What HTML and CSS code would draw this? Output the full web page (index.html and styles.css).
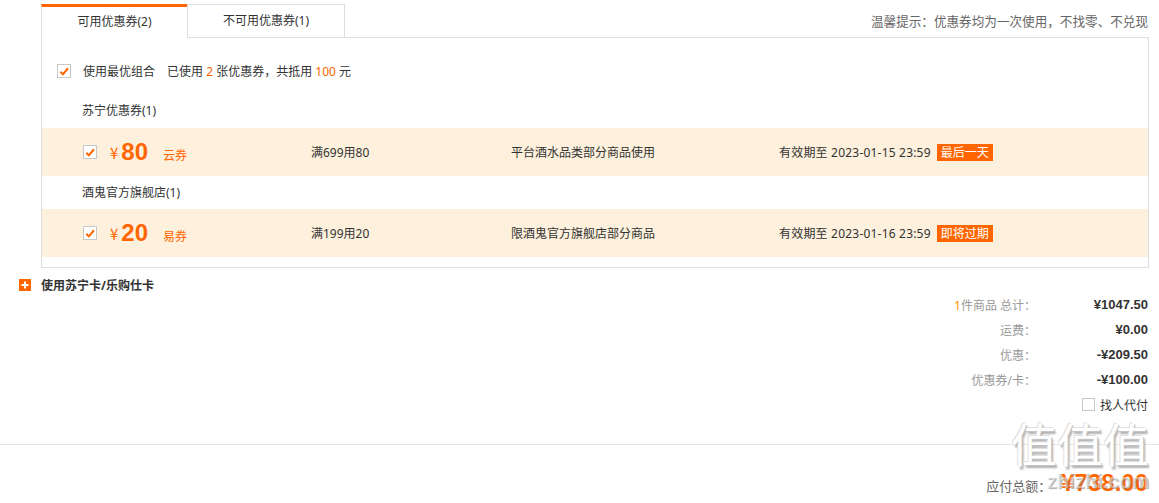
FILE: index.html
```html
<!DOCTYPE html>
<html>
<head>
<meta charset="utf-8">
<link rel="stylesheet" href="styles.css">
</head>
<body>
<div class="page">
  <div class="top">
    <div class="tabs">
      <div class="tab active">可用优惠券(2)</div>
      <div class="tab">不可用优惠券(1)</div>
    </div>
    <div class="tip">温馨提示：优惠券均为一次使用，不找零、不兑现</div>
  </div>
  <div class="panel">
    <div class="combo">
      <span class="cb checked"><svg viewBox="0 0 13 13" width="13" height="13"><path d="M2.5 6.8 L5.3 9.6 L10.8 3" fill="none" stroke="#f60" stroke-width="2.2"/></svg></span>
      <span class="combo-label">使用最优组合</span>
      <span class="combo-info">已使用 <em>2</em> 张优惠券，共抵用 <em>100</em> 元</span>
    </div>
    <div class="group-title first">苏宁优惠券(1)</div>
    <div class="coupon">
      <div class="c-amount">
        <span class="cb checked"><svg viewBox="0 0 13 13" width="13" height="13"><path d="M2.5 6.8 L5.3 9.6 L10.8 3" fill="none" stroke="#f60" stroke-width="2.2"/></svg></span>
        <span class="yen">¥</span><span class="num">80</span><span class="kind">云券</span>
      </div>
      <div class="c-rule">满699用80</div>
      <div class="c-scope">平台酒水品类部分商品使用</div>
      <div class="c-date"><span class="date-text">有效期至 2023-01-15 23:59</span><span class="badge">最后一天</span></div>
    </div>
    <div class="group-title">酒鬼官方旗舰店(1)</div>
    <div class="coupon">
      <div class="c-amount">
        <span class="cb checked"><svg viewBox="0 0 13 13" width="13" height="13"><path d="M2.5 6.8 L5.3 9.6 L10.8 3" fill="none" stroke="#f60" stroke-width="2.2"/></svg></span>
        <span class="yen">¥</span><span class="num">20</span><span class="kind">易券</span>
      </div>
      <div class="c-rule">满199用20</div>
      <div class="c-scope">限酒鬼官方旗舰店部分商品</div>
      <div class="c-date"><span class="date-text">有效期至 2023-01-16 23:59</span><span class="badge">即将过期</span></div>
    </div>
  </div>
  <div class="card-row">
    <span class="plus"><svg viewBox="0 0 12 12" width="12" height="12"><rect width="12" height="12" fill="#f60"/><path d="M6 2.5 V9.5 M2.5 6 H9.5" stroke="#fff" stroke-width="2"/></svg></span>
    <span class="card-label">使用苏宁卡/乐购仕卡</span>
  </div>
  <div class="summary">
    <div class="s-row"><span class="s-label"><i>1</i>件商品 总计：</span><span class="s-val">¥1047.50</span></div>
    <div class="s-row"><span class="s-label">运费：</span><span class="s-val">¥0.00</span></div>
    <div class="s-row"><span class="s-label">优惠：</span><span class="s-val">-¥209.50</span></div>
    <div class="s-row"><span class="s-label">优惠券/卡：</span><span class="s-val">-¥100.00</span></div>
    <div class="s-row pay"><span class="cb"></span><span class="pay-label">找人代付</span></div>
  </div>
  <div class="divider"></div>
  <div class="total">
    <span class="t-label">应付总额：</span><span class="t-val">¥738.00</span>
    <div class="watermark"><span class="wm-big">值值值</span><span class="wm-small">zhizhi.com</span></div>
  </div>
</div>
</body>
</html>
```

FILE: styles.css
```css
* { box-sizing: border-box; }
html, body { margin: 0; padding: 0; background: #fff; }
body {
  font-family: "Noto Sans", "Noto Sans CJK SC", "Microsoft YaHei", sans-serif;
  font-size: 12px;
  color: #333;
}
.page { width: 1159px; height: 503px; overflow: hidden; }

.top {
  display: flex;
  justify-content: space-between;
  align-items: flex-end;
  padding: 4px 11px 0 41px;
  height: 37px;
}
.tabs { display: flex; position: relative; z-index: 1; margin-bottom: -1px; }
.tab {
  height: 34px;
  line-height: 31px;
  text-align: center;
  font-size: 12px;
  color: #333;
  border: 1px solid #ddd;
}
.tab.active {
  width: 146px;
  border-top: 3px solid #f60;
  border-right: none;
  border-bottom: none;
  background: #fff;
  line-height: 29px;
}
.tab:not(.active) {
  width: 158px;
  background: #fff;
}
.tip {
  color: #666;
  font-size: 12.6px;
  line-height: 16px;
  margin-bottom: 7px;
}

.panel {
  margin-left: 41px;
  width: 1108px;
  border: 1px solid #ddd;
  padding: 13px 0 10px;
}
.combo {
  display: flex;
  align-items: center;
  height: 40px;
  padding-left: 15px;
}
.cb {
  display: inline-flex;
  width: 14px;
  height: 14px;
  border: 1px solid #c8c8c8;
  background: #fff;
  align-items: center;
  justify-content: center;
  flex: none;
}
.cb svg { display: block; }
.combo-label { margin-left: 12px; }
.combo-info { margin-left: 12px; }
.combo-info em { font-style: normal; color: #f60; }

.group-title {
  padding-left: 40px;
  line-height: 33px;
  height: 33px;
}
.group-title.first { padding-top: 3px; height: 37px; line-height: 34px; }

.coupon {
  display: grid;
  grid-template-columns: 269px 200px 268px 1fr;
  align-items: center;
  height: 48px;
  background: #fdf0dc;
}
.c-amount {
  display: flex;
  align-items: center;
  padding-left: 41px;
}
.yen {
  color: #f60;
  font-size: 15px;
  margin-left: 13px;
  margin-right: 3px;
  font-family: "Noto Sans CJK SC", sans-serif;
}
.num {
  color: #f60;
  font-family: "Liberation Sans", Arial, sans-serif;
  font-weight: bold;
  font-size: 24px;
  line-height: 24px;
}
.kind {
  color: #f60;
  margin-left: 15px;
  margin-top: 5px;
}
.c-date { display: flex; align-items: center; }
.date-text { letter-spacing: 0.2px; }
.badge {
  display: inline-block;
  margin-left: 6px;
  background: #f60;
  color: #fff;
  height: 17px;
  line-height: 17px;
  padding: 0 4px;
  font-size: 12px;
}

.card-row {
  display: flex;
  align-items: center;
  height: 14px;
  margin-top: 10px;
  padding-left: 19px;
}
.plus { display: inline-flex; }
.card-label {
  margin-left: 10px;
  font-weight: bold;
  color: #333;
}

.summary { display: flex; flex-direction: column; align-items: flex-end; padding-right: 11px; margin-top: 0; }
.s-row { display: flex; align-items: center; height: 25px; }
.s-label { color: #999; text-align: right; }
.s-label i { font-style: normal; color: #f90; }
.s-val {
  width: 112px;
  text-align: right;
  font-family: "Liberation Sans", Arial, sans-serif;
  font-weight: bold;
  font-size: 13px;
  color: #333;
}
.pay .cb { width: 13px; height: 13px; }
.pay-label { margin-left: 5px; color: #333; }

.divider { height: 1px; background: #e6e6e6; margin-top: 27px; }

.total {
  position: relative;
  display: flex;
  justify-content: flex-end;
  align-items: center;
  height: 24px;
  margin-top: 26px;
  padding-right: 11px;
}
.t-label { color: #666; font-size: 13px; margin-top: 4px; }
.t-val {
  color: #f60;
  font-family: "Liberation Sans", Arial, sans-serif;
  font-weight: bold;
  font-size: 24px;
  margin-left: 10px;
}
.watermark {
  position: absolute;
  right: 10px;
  top: -53px;
  display: flex;
  flex-direction: column;
  align-items: flex-end;
  pointer-events: none;
}
.wm-big {
  font-family: "Noto Sans CJK SC", sans-serif;
  font-size: 46px;
  line-height: 48px;
  color: #fff;
  text-shadow: 1px 1px 0 #c4c4c4, -1px -1px 0 #e0e0e0, 2px 3px 2px #b0b0b0;
}
.wm-small {
  font-family: "Liberation Sans", Arial, sans-serif;
  font-size: 20px;
  line-height: 22px;
  font-weight: bold;
  color: rgba(255,255,255,0.45);
  text-shadow: 1px 1px 1px rgba(120,120,120,0.6);
  margin-top: 4px;
}
```
